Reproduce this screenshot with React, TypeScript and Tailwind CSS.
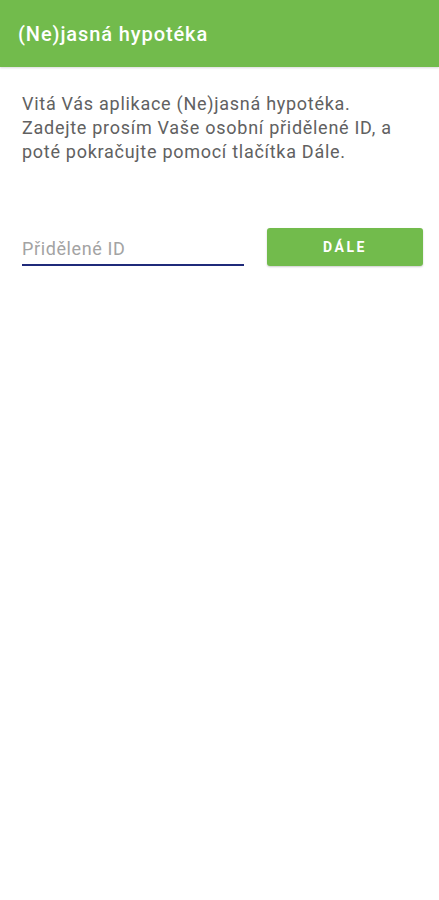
import React, { useState } from 'react';

const App: React.FC = () => {
  const [id, setId] = useState('');

  return (
    <div className="min-h-screen bg-white" style={{ fontFamily: 'Roboto, "Noto Sans", sans-serif' }}>
      {/* Toolbar */}
      <header className="h-[67px] bg-[#72bb4c] flex items-center px-[18px] shadow-[0_1px_2px_rgba(0,0,0,0.15)]">
        <h1 className="text-[20px] font-medium text-white tracking-[0.9px]">(Ne)jasná hypotéka</h1>
      </header>

      <main className="pl-[22px] pr-[16px] pt-[25px]">
        <p className="text-[18px] leading-[24px] tracking-[0.72px] text-[#616161]">
          Vitá Vás aplikace (Ne)jasná hypotéka.
          <br />
          Zadejte prosím Vaše osobní přidělené ID, a
          <br />
          poté pokračujte pomocí tlačítka Dále.
        </p>

        <div className="flex items-center mt-[64px]">
          <div className="w-[222px] shrink-0">
            <input
              value={id}
              onChange={(e) => setId(e.target.value)}
              placeholder="Přidělené ID"
              className="w-full h-[38px] pt-[4px] text-[18px] tracking-[0.6px] text-[#333] placeholder:text-[#a3a3a3] outline-none border-b-2 border-[#1f2a7a] bg-transparent"
            />
          </div>
          <button className="ml-[23px] w-[156px] shrink-0 h-[38px] rounded-[3px] bg-[#72bb4c] text-white text-[14px] font-bold tracking-[2.5px] shadow-[0_1px_2px_rgba(0,0,0,0.2)]">
            DÁLE
          </button>
        </div>
      </main>
    </div>
  );
};

export default App;
